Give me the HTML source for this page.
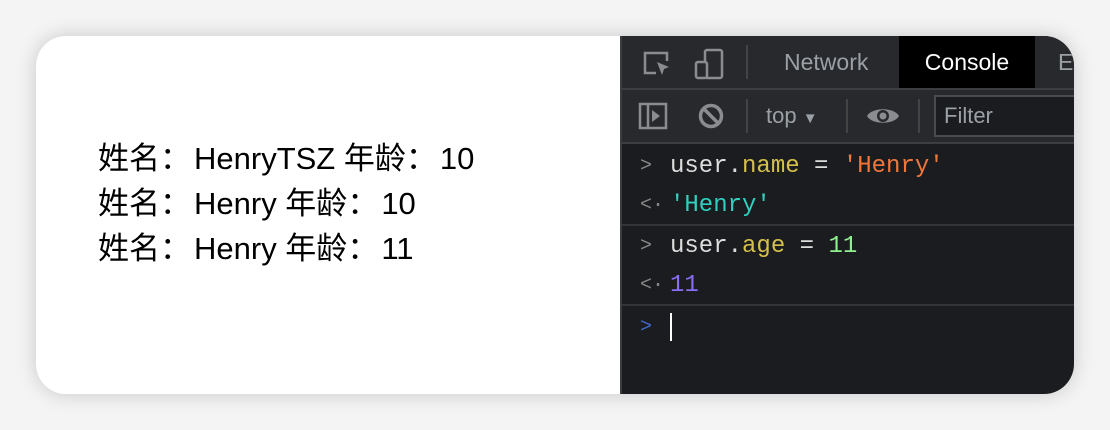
<!DOCTYPE html>
<html><head><meta charset="utf-8"><style>
body{margin:0;width:1110px;height:430px;background:#f4f4f4;overflow:hidden;position:relative}
.card{position:absolute;left:36px;top:36px;width:1038px;height:358px;border-radius:30px;background:#fff;overflow:hidden;box-shadow:0 0 20px rgba(0,0,0,.18)}
.left{position:absolute;left:62px;top:100px;font:31px/45px "Liberation Sans","Noto Sans CJK SC",sans-serif;color:#000;letter-spacing:0;white-space:nowrap}
.c{display:inline-block;width:34px}
.dev{position:absolute;left:584px;top:0;width:454px;height:358px;background:#1b1c1f;border-left:2px solid #3c3d40}
.tb{position:absolute;left:0;right:0;background:#28292c;border-bottom:2px solid #3d3e42;font-family:"Liberation Sans",sans-serif;color:#9aa0a6}
.t1{top:0;height:52px}.t2{top:54px;height:52px}
.tab{position:absolute;top:0;height:52px;line-height:52px;font-size:23px}
.sep{position:absolute;width:2px;height:34px;background:#444;top:9px}
.con{position:absolute;top:110px;left:0;right:0;font:24px "Liberation Mono","DejaVu Sans Mono",monospace;color:#ddd}
.row{height:39px;line-height:42px;padding-left:48px;position:relative}
.row .p{position:absolute;left:18px;color:#888;font-size:20px}
.line{border-bottom:2px solid #333438}
</style></head><body>
<div class="card">
<div class="left">姓名<span class="c">：</span>HenryTSZ 年龄<span class="c">：</span>10<br>姓名<span class="c">：</span>Henry 年龄<span class="c">：</span>10<br>姓名<span class="c">：</span>Henry 年龄<span class="c">：</span>11</div>
<div class="dev">
 <div class="tb t1">
  <svg style="position:absolute;left:20px;top:13px" width="30" height="30" viewBox="0 0 30 30" fill="none" stroke="#8a8c90" stroke-width="2.5"><path d="M14 24H3V4h22v8"/><path d="M15 13l12 5-5 2-2 6z" fill="#8a8c90" stroke="none"/></svg>
  <svg style="position:absolute;left:72px;top:12px" width="32" height="32" viewBox="0 0 32 32" fill="none" stroke="#8a8c90" stroke-width="2.5"><rect x="11" y="2" width="17" height="28" rx="2"/><rect x="2" y="14" width="11" height="16" rx="2" fill="#28292c"/></svg>
  <div class="sep" style="left:124px"></div>
  <div class="tab" style="left:162px">Network</div>
  <div class="tab" style="left:277px;width:136px;background:#000;color:#fff;text-align:center">Console</div>
  <div class="tab" style="left:436px">E</div>
 </div>
 <div class="tb t2">
  <svg style="position:absolute;left:16px;top:12px" width="30" height="28" viewBox="0 0 30 28" fill="none" stroke="#8a8c90" stroke-width="2.5"><rect x="2" y="2" width="26" height="24"/><path d="M10 2v24"/><path d="M14 8l8 6-8 6z" fill="#8a8c90" stroke="none"/></svg>
  <svg style="position:absolute;left:76px;top:13px" width="26" height="26" viewBox="0 0 26 26" fill="none" stroke="#8a8c90" stroke-width="3.5"><circle cx="13" cy="13" r="10.5"/><path d="M6 6l14 14"/></svg>
  <div class="sep" style="left:124px"></div>
  <div class="tab" style="left:144px;font-size:22px">top <span style="font-size:15px">▼</span></div>
  <div class="sep" style="left:224px"></div>
  <svg style="position:absolute;left:244px;top:14px" width="34" height="24" viewBox="0 0 34 24"><path d="M1 12C6 3 28 3 33 12 28 21 6 21 1 12z" fill="#8a8c90"/><circle cx="17" cy="12" r="6" fill="#28292c"/><circle cx="17" cy="12" r="3.5" fill="#8a8c90"/></svg>
  <div class="sep" style="left:296px"></div>
  <div style="position:absolute;left:312px;top:5px;width:150px;height:38px;border:2px solid #4a4b4f;background:#1b1c1f;line-height:38px;padding-left:8px;font-size:22px;color:#9aa0a6">Filter</div>
 </div>
 <div class="con">
  <div class="row"><span class="p">&gt;</span>user.<span style="color:#d4c04a">name</span> = <span style="color:#f0773c">'Henry'</span></div>
  <div class="row line"><span class="p">&lt;·</span><span style="color:#2fd0c0">'Henry'</span></div>
  <div class="row"><span class="p">&gt;</span>user.<span style="color:#d4c04a">age</span> = <span style="color:#90f090">11</span></div>
  <div class="row line"><span class="p">&lt;·</span><span style="color:#8a6cf5">11</span></div>
  <div class="row" style="height:44px;line-height:44px"><span class="p" style="color:#3f67c9">&gt;</span><span style="display:inline-block;width:2px;height:28px;background:#fff;vertical-align:middle"></span></div>
 </div>
</div>
</div>
</body></html>
